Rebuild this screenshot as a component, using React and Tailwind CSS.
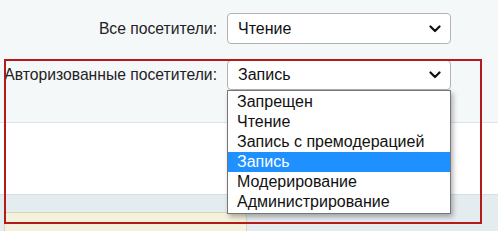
import React from "react";

const Chevron = () => (
  <svg width="12" height="8" viewBox="0 0 12 8" className="absolute right-[9px] top-1/2 -translate-y-1/2">
    <path d="M1.5 1.5 L6 6 L10.5 1.5" fill="none" stroke="#111" strokeWidth="2.2" strokeLinecap="round" strokeLinejoin="round" />
  </svg>
);

const Select = ({ value, h }) => (
  <div className={`relative w-[224px] ${h} bg-white border border-[#b3b3b3] rounded-[4px] flex items-center pl-[10px] text-[16px] text-[#111]`}>
    <span>{value}</span>
    <Chevron />
  </div>
);

export default function App() {
  const options = ["Запрещен", "Чтение", "Запись с премодерацией", "Запись", "Модерирование", "Администрирование"];
  return (
    <div className="relative w-[498px] h-[231px] overflow-hidden bg-[#e5ecef] text-[16px]" style={{ fontFamily: '"Liberation Sans", Arial, sans-serif' }}>
      <div className="h-[123px] bg-[#f5f8f9] border-b border-[#dbe4e8] pt-[13px] flex flex-col gap-[16px]">
        <div className="flex items-center">
          <div className="w-[227px] pr-[10px] text-right text-[#222] text-[15.7px]">Все посетители:</div>
          <Select value="Чтение" h="h-[31px]" />
        </div>
        <div className="flex items-center">
          <div className="w-[227px] pr-[10px] text-right text-[#222] text-[15.7px]">Авторизованные посетители:</div>
          <Select value="Запись" h="h-[30px]" />
        </div>
      </div>
      <div className="h-[72px] bg-white border-b border-[#d6dee2]"></div>
      <div className="pt-[17px] pl-[4px]">
        <div className="w-[243px] h-[30px] bg-[#f4f2dc] border border-[#d9d5b8] rounded-tr-[5px]"></div>
      </div>

      <div className="absolute left-[227px] top-[90px] w-[224px] bg-white border border-[#767676] shadow-[2px_3px_5px_rgba(0,0,0,0.3)] py-[1px]">
        {options.map((o) => (
          <div
            key={o}
            className={`h-[20px] leading-[20px] pl-[9px] ${o === "Запись" ? "bg-[#1e90ff] text-white" : "text-[#111]"}`}
          >
            {o}
          </div>
        ))}
      </div>

      <div className="absolute left-[4px] top-[59px] w-[478px] h-[165px] border-2 border-[#b31b1b] pointer-events-none"></div>
    </div>
  );
}
